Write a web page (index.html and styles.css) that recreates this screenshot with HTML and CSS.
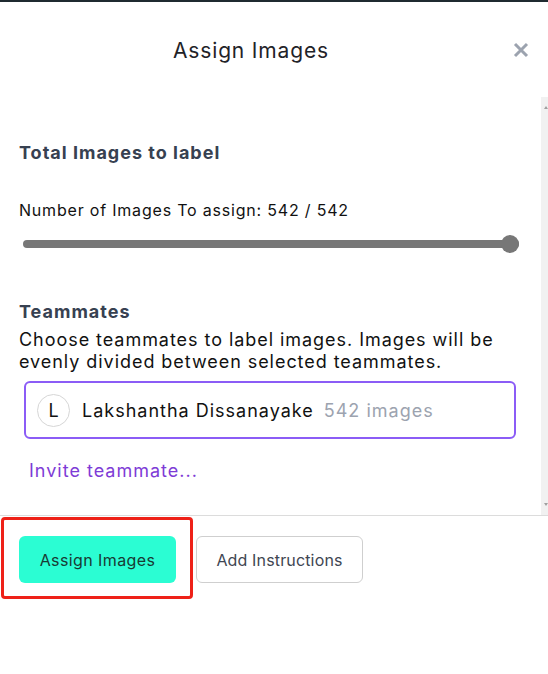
FILE: index.html
```html
<!DOCTYPE html>
<html>
<head>
<meta charset="utf-8">
<link rel="stylesheet" href="styles.css">
</head>
<body>
<div class="topbar"></div>
<div class="modal">
  <header class="header">
    <h1 class="title">Assign Images</h1>
    <button class="close" aria-label="Close">
      <svg width="16" height="16" viewBox="0 0 16 16"><path d="M2 2 L14 14 M14 2 L2 14" stroke="#9ca3af" stroke-width="3" stroke-linecap="butt"/></svg>
    </button>
  </header>
  <div class="body">
    <div class="content">
      <h2 class="section-title">Total Images to label</h2>
      <p class="count-label">Number of Images To assign: 542 / 542</p>
      <div class="slider">
        <div class="track"></div>
        <div class="thumb"></div>
      </div>
      <h2 class="section-title teammates-title">Teammates</h2>
      <p class="desc">Choose teammates to label images. Images will be evenly divided between selected teammates.</p>
      <div class="teammate">
        <span class="avatar">L</span>
        <span class="name">Lakshantha Dissanayake</span>
        <span class="images">542 images</span>
      </div>
      <a class="invite">Invite teammate...</a>
    </div>
    <div class="scrollbar">
      <span class="arrow up"></span>
      <span class="arrow down"></span>
    </div>
  </div>
  <footer class="footer">
    <button class="btn primary">Assign Images</button>
    <button class="btn secondary">Add Instructions</button>
  </footer>
  <div class="highlight"></div>
</div>
</body>
</html>
```

FILE: styles.css
```css
* { box-sizing: border-box; }
html, body { margin: 0; padding: 0; background: #fff; }
body {
  font-family: Inter, "Noto Sans", sans-serif;
  color: #111;
  width: 548px;
  height: 674px;
  overflow: hidden;
}
.topbar { height: 2px; background: #1f2a30; }
.modal { position: relative; }
.header {
  height: 95px;
  display: flex;
  align-items: center;
}
.title {
  flex: 1;
  margin: 0;
  text-align: center;
  font-size: 21px;
  font-weight: 400;
  letter-spacing: 0.85px;
  color: #1f2328;
  line-height: 28px;
  padding-top: 3px;
}
.close {
  width: 46px;
  height: 28px;
  border: 0;
  background: none;
  padding: 0 8px 0 0;
  display: flex;
  align-items: center;
  justify-content: center;
  margin-top: 1px;
}
.body {
  height: 418px;
  display: flex;
}
.content {
  flex: 1;
  padding: 42px 0 0 19px;
}
.scrollbar {
  width: 7px;
  background: #f1f1f1;
  display: flex;
  flex-direction: column;
  justify-content: space-between;
  align-items: flex-end;
  padding: 9px 0 9px;
}
.arrow {
  width: 0; height: 0;
  border-left: 2px solid transparent;
  border-right: 2px solid transparent;
}
.arrow.up { border-bottom: 3px solid #a0a0a0; }
.arrow.down { border-top: 3px solid #a0a0a0; }
.section-title {
  margin: 0;
  font-size: 18px;
  font-weight: 700;
  letter-spacing: 1px;
  line-height: 27px;
  color: #374151;
}
.count-label {
  margin: 32px 0 0;
  font-size: 16px;
  letter-spacing: 0.8px;
  line-height: 24px;
  color: #111;
}
.slider {
  position: relative;
  margin: 13px 0 0 4px;
  width: 496px;
  height: 18px;
  display: flex;
  align-items: center;
}
.track {
  width: 100%;
  height: 8px;
  border-radius: 4px;
  background: #777;
}
.thumb {
  position: absolute;
  right: 0;
  top: 0;
  width: 18px;
  height: 18px;
  border-radius: 50%;
  background: #777;
}
.teammates-title { margin-top: 46px; line-height: 26px; }
.desc {
  margin: 4px 0 0;
  font-size: 18px;
  letter-spacing: 0.95px;
  line-height: 22px;
  color: #111;
}
.teammate {
  margin: 8px 25px 0 5px;
  height: 58px;
  border: 2px solid #8b5cf6;
  border-radius: 6px;
  display: flex;
  align-items: center;
  padding-left: 11px;
  font-size: 18px;
  letter-spacing: 1px;
}
.avatar {
  width: 33px;
  height: 33px;
  border-radius: 50%;
  border: 1px solid #d6d6d6;
  display: flex;
  align-items: center;
  justify-content: center;
  font-size: 18px;
  letter-spacing: 0;
  color: #111;
}
.name { margin-left: 12px; color: #111; }
.images { margin-left: 10px; color: #9ca3af; }
.invite {
  display: block;
  margin: 19px 0 0 10px;
  font-size: 18px;
  letter-spacing: 1px;
  line-height: 26px;
  color: #7e3bd6;
}
.footer {
  border-top: 1px solid #dcdcdc;
  padding: 20px 19px;
  display: flex;
  gap: 20px;
}
.btn {
  height: 47px;
  border-radius: 6px;
  font-family: Inter, "Noto Sans", sans-serif;
  font-size: 16px;
  padding: 0;
}
.primary {
  width: 157px;
  background: #2bfdd3;
  border: 0;
  color: #193a33;
  letter-spacing: 0.4px;
}
.secondary {
  width: 167px;
  background: #fff;
  border: 1px solid #cfcfcf;
  color: #404652;
  letter-spacing: 0.15px;
}
.highlight {
  position: absolute;
  left: 1px;
  top: 515px;
  width: 192px;
  height: 82px;
  border: 3px solid #ee2118;
  border-radius: 4px;
  pointer-events: none;
}
```
